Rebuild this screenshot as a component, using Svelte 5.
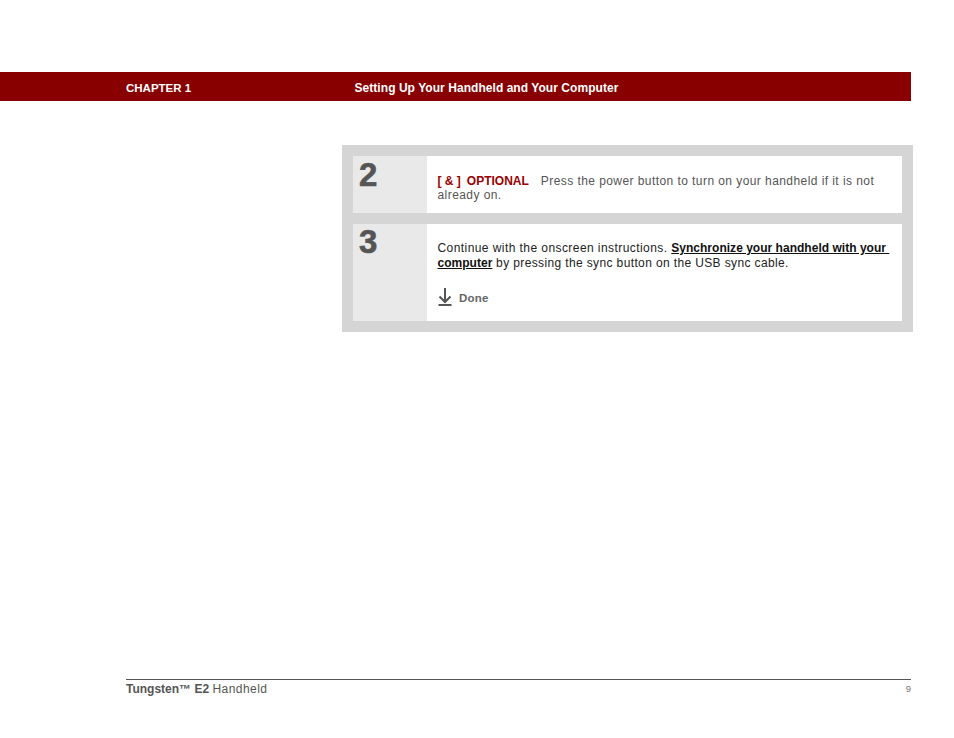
<script>
  // steps of the page
  const chapter = "CHAPTER 1";
  const title = "Setting Up Your Handheld and Your Computer";
</script>

<div class="page">
  <header class="bar">
    <span class="chapter">{chapter}</span>
    <span class="title">{title}</span>
  </header>

  <section class="panel">
    <div class="step step-short">
      <div class="num">2</div>
      <div class="body">
        <p class="grey"><span class="opt"><span class="amp">[ &amp; ]</span>OPTIONAL</span>Press the power button to turn on your handheld if it is not already on.</p>
      </div>
    </div>
    <div class="step step-tall">
      <div class="num">3</div>
      <div class="body">
        <p>Continue with the onscreen instructions. <a href="#sync">Synchronize your handheld with your&nbsp;</a> <a href="#sync">computer</a> <span class="tight">by pressing the sync button on the USB sync cable.</span></p>
        <div class="done">
          <svg width="14" height="18" viewBox="0 0 14 18" aria-hidden="true">
            <path d="M7 0V13.5" fill="none" stroke="#555" stroke-width="2" />
            <path d="M1.5 8.5L7 14L12.5 8.5" fill="none" stroke="#555" stroke-width="2" />
            <path d="M0.5 17H13.5" fill="none" stroke="#555" stroke-width="2" />
          </svg>
          <span>Done</span>
        </div>
      </div>
    </div>
  </section>

  <footer class="foot">
    <span class="product"><b>Tungsten™ E2</b> <span class="light">Handheld</span></span>
    <span class="pageno">9</span>
  </footer>
</div>

<style>
  :global(body) {
    margin: 0;
    background: #fff;
  }

  .page {
    width: 954px;
    height: 738px;
    padding-top: 72px;
    box-sizing: border-box;
    font-family: "Liberation Sans", Arial, sans-serif;
    display: flex;
    flex-direction: column;
  }

  .bar {
    width: 911px;
    height: 29px;
    box-sizing: border-box;
    padding: 2px 0 0 126px;
    background: #880000;
    color: #fff;
    font-size: 12px;
    font-weight: bold;
    display: flex;
    align-items: center;
  }

  .chapter {
    width: 228.5px;
    font-size: 11.5px;
  }

  .title {
    letter-spacing: 0.05px;
  }

  .panel {
    margin: 44px 0 0 342px;
    width: 571px;
    box-sizing: border-box;
    padding: 11px;
    background: #d5d5d5;
    display: flex;
    flex-direction: column;
    gap: 11px;
  }

  .step {
    display: flex;
    background: #fff;
  }

  .step-short {
    height: 57px;
  }

  .step-short .body {
    padding-top: 18px;
    line-height: 14px;
  }

  .step-tall {
    height: 97px;
  }

  .step-tall .num {
    padding-top: 0;
  }

  .num {
    width: 74px;
    box-sizing: border-box;
    padding: 1px 0 0 6px;
    background: #e9e9e9;
    color: #555;
    font-size: 33px;
    font-weight: bold;
    line-height: 36px;
    -webkit-text-stroke: 0.6px #555;
  }

  .body {
    flex: 1;
    padding: 17px 5px 0 10.5px;
    font-size: 12px;
    line-height: 15px;
    letter-spacing: 0.43px;
    color: #222;
  }

  .body p {
    margin: 0;
  }

  .grey {
    color: #555;
  }

  .tight {
    letter-spacing: 0.37px;
  }

  .opt {
    color: #990000;
    font-weight: bold;
    margin-right: 12px;
    letter-spacing: 0;
  }

  .amp {
    margin-right: 6px;
  }

  a {
    color: #111;
    font-weight: bold;
    text-decoration: underline;
    letter-spacing: 0.02px;
  }

  .done {
    display: flex;
    align-items: center;
    gap: 7px;
    margin-top: 16px;
    color: #666;
    font-weight: bold;
    font-size: 11.5px;
    letter-spacing: 0.2px;
  }

  .done svg {
    margin: 1px 0 0 0.5px;
  }

  .done span {
    margin-top: 3px;
  }

  .foot {
    margin: auto 43px 42px 126px;
    border-top: 1px solid #555;
    display: flex;
    justify-content: space-between;
    padding-top: 2px;
    color: #555;
    font-size: 12px;
    line-height: 14px;
  }

  .light {
    letter-spacing: 0.45px;
  }

  .pageno {
    font-size: 9.5px;
    color: #777;
  }
</style>
